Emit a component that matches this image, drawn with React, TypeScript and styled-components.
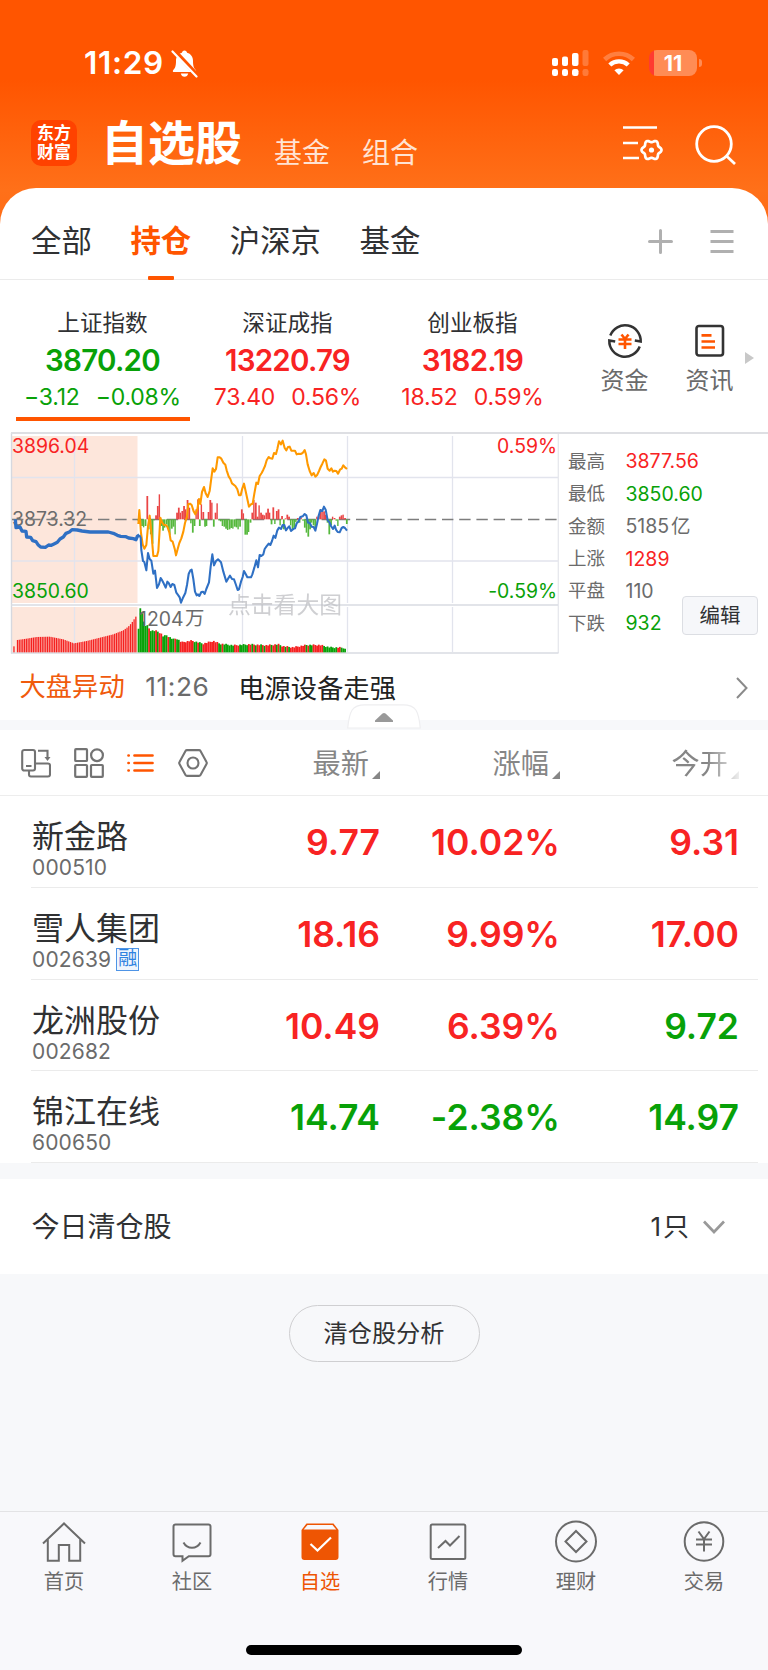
import React from "react";
import styled, { createGlobalStyle, css } from "styled-components";

const ORANGE = "#ff5500";
const RED = "#f82323";
const GREEN = "#08a108";
const INK = "#303133";
const GREY = "#6b6b6b";
const PAGE = "#f7f8fa";

type Trend = "up" | "down" | "flat";
const trendColor = (t: Trend) => (t === "up" ? RED : t === "down" ? GREEN : GREY);

const GlobalStyle = createGlobalStyle`
  *, *::before, *::after { box-sizing: border-box; }
  html, body { margin: 0; padding: 0; }
  body {
    background: ${PAGE};
    color: ${INK};
    font-family: Inter, "Noto Sans CJK SC", sans-serif;
    font-feature-settings: "calt" 0;
  }
  svg { display: block; flex: none; }
`;

const Phone = styled.div`
  width: 768px;
  height: 1670px;
  display: flex;
  flex-direction: column;
  overflow: hidden;
  background: ${PAGE};
`;

/* ---------- Header ---------- */

const Header = styled.header`
  height: 240px;
  margin-bottom: -52px;
  flex: none;
  background: linear-gradient(180deg, #ff5500 0, #ff5500 80px, #ff7019 190px, #ff6a14 240px);
  color: #fff;
`;

const StatusBar = styled.div`
  height: 90px;
  padding: 36px 66px 0 84px;
  display: flex;
  justify-content: space-between;
`;

const StatusGroup = styled.div<{ $gap: number }>`
  height: 54px;
  display: flex;
  align-items: center;
  gap: ${(p) => p.$gap}px;
`;

const Clock = styled.span`
  font-size: 31.5px;
  line-height: 36px;
  font-weight: 600;
  letter-spacing: 0.7px;
`;

const Battery = styled.div`
  position: relative;
  width: 48px;
  height: 26px;
  border-radius: 8px;
  margin-right: 5px;
  background: linear-gradient(90deg, #ff3b30 0, #ff3b30 5px, #ff8c55 5px);
  font-size: 21.5px;
  line-height: 26px;
  font-weight: 700;
  text-align: center;
  &::after {
    content: "";
    position: absolute;
    right: -5px;
    top: 9px;
    width: 3px;
    height: 8px;
    border-radius: 0 4px 4px 0;
    background: #ff8c55;
  }
`;

const TitleBar = styled.div`
  height: 98px;
  padding: 0 32px 0 31px;
  display: flex;
  align-items: center;
`;

const Logo = styled.div`
  width: 46px;
  height: 46px;
  margin-top: 8px;
  border-radius: 10px;
  background: #ff4200;
  display: flex;
  flex-direction: column;
  align-items: center;
  justify-content: center;
  font-size: 17px;
  line-height: 19px;
  font-weight: 700;
`;

const PageTitle = styled.h1`
  margin: 7px 0 0 24px;
  font-size: 47px;
  line-height: 60px;
  font-weight: 700;
`;

const PageLink = styled.span`
  margin: 27px 0 0 32px;
  font-size: 28px;
  line-height: 36px;
  color: #ffe3d3;
  & + & { margin-left: 32px; }
`;

const HeaderActions = styled.div`
  margin: 13px 0 0 auto;
  display: flex;
  gap: 32px;
`;

/* ---------- Tabs ---------- */

const Panel = styled.section`
  flex: none;
  background: #fff;
`;

const TabsPanel = styled(Panel)`
  position: relative;
  height: 92px;
  border-radius: 36px 36px 0 0;
  border-bottom: 1px solid #ebebeb;
  padding: 0 34px 0 31px;
  display: flex;
  align-items: stretch;
`;

const Tab = styled.div<{ $active?: boolean }>`
  position: relative;
  margin-right: 38.6px;
  padding-top: 34px;
  font-size: 30.4px;
  line-height: 38px;
  color: ${(p) => (p.$active ? ORANGE : INK)};
  font-weight: ${(p) => (p.$active ? 700 : 400)};
  ${(p) =>
    p.$active &&
    css`
      &::after {
        content: "";
        position: absolute;
        left: calc(50% - 13px);
        bottom: -1px;
        width: 26px;
        height: 4px;
        border-radius: 1px;
        background: ${ORANGE};
      }
    `}
`;

const TabActions = styled.div`
  margin-left: auto;
  padding-top: 41px;
  display: flex;
  gap: 37px;
`;

/* ---------- Index strip ---------- */

const IndexStrip = styled(Panel)`
  height: 152px;
  padding-left: 10px;
  display: flex;
`;

const IndexCard = styled.div<{ $trend: Trend; $active?: boolean }>`
  flex: none;
  width: 185px;
  padding-top: 31px;
  display: flex;
  flex-direction: column;
  align-items: center;
  color: ${(p) => trendColor(p.$trend)};
  &::after {
    content: "";
    margin-top: 8px;
    width: 174px;
    height: 4px;
    background: ${(p) => (p.$active ? ORANGE : "transparent")};
  }
`;

const IndexName = styled.div`
  font-size: 22.6px;
  line-height: 24px;
  color: ${INK};
`;

const IndexValue = styled.div`
  margin-top: 8px;
  font-size: 29.5px;
  line-height: 34px;
  font-weight: 600;
  letter-spacing: -0.75px;
`;

const IndexChange = styled.div`
  margin-top: 8px;
  display: flex;
  gap: 16px;
  font-size: 23px;
  line-height: 24px;
  letter-spacing: -0.2px;
`;

const Shortcuts = styled.div`
  flex: none;
  display: flex;
  margin-left: 17px;
`;

const Shortcut = styled.div`
  width: 85px;
  padding-top: 43px;
  display: flex;
  flex-direction: column;
  align-items: center;
  gap: 7px;
  font-size: 24px;
  line-height: 30px;
  color: ${GREY};
`;

const MoreArrow = styled.div`
  margin: 72px 0 0 -7px;
  width: 0;
  height: 0;
  border-style: solid;
  border-width: 6px 0 6px 9px;
  border-color: transparent transparent transparent #c8c8c8;
`;

/* ---------- Chart ---------- */

const ChartRow = styled(Panel)`
  height: 223px;
  display: flex;
`;

const StatPanel = styled.div`
  position: relative;
  flex: 1;
  border-top: 2px solid #dedfe3;
  padding: 11px 0 0 8px;
`;

const StatRow = styled.div`
  display: grid;
  grid-template-columns: 57.5px auto;
  height: 32.45px;
  align-items: center;
`;

const StatLabel = styled.span`
  font-size: 18.5px;
  line-height: 28px;
  margin-top: -1px;
  color: ${GREY};
`;

const StatValue = styled.span<{ $trend: Trend }>`
  font-size: 19.5px;
  line-height: 28px;
  color: ${(p) => trendColor(p.$trend)};
`;

const EditButton = styled.button`
  position: absolute;
  left: 122px;
  top: 162px;
  width: 76px;
  height: 39px;
  padding: 0;
  border: 1.5px solid #dcdee3;
  border-radius: 4px;
  background: #f6f7fa;
  font: 400 20.5px/34px Inter, "Noto Sans CJK SC", sans-serif;
  color: ${INK};
`;

const ChartText = styled.text<{ $trend: Trend }>`
  font-size: 19.4px;
  fill: ${(p) => trendColor(p.$trend)};
`;

const Watermark = styled.text`
  font-size: 22.8px;
  fill: #bfc0c4;
  opacity: 0.75;
`;

/* ---------- News ---------- */

const NewsRow = styled(Panel)`
  height: 65px;
  padding: 0 20px 0 19.5px;
  display: flex;
  align-items: center;
  font-size: 26.3px;
  line-height: 34px;
`;

const NewsTag = styled.span`
  margin-top: -1px;
  color: #f05a0c;
`;

const NewsTime = styled.span`
  margin: -1px 0 0 20.5px;
  width: 93px;
  letter-spacing: 0.6px;
  color: ${GREY};
`;

const NewsTitle = styled.span`
  flex: 1;
  margin-top: 2px;
  color: #222;
`;

const Band = styled.div<{ $h: number }>`
  position: relative;
  flex: none;
  height: ${(p) => p.$h}px;
  background: ${PAGE};
`;

const Notch = styled.div`
  position: absolute;
  left: 347px;
  top: -16px;
`;

/* ---------- Watch list ---------- */

const TableHead = styled(Panel)`
  height: 66px;
  border-bottom: 1.5px solid #ededed;
  padding: 2px 0 0 20.5px;
  display: flex;
`;

const ViewModes = styled.div`
  width: 188px;
  display: flex;
  align-items: center;
  justify-content: space-between;
  padding-bottom: 2px;
`;

const HeadCell = styled.div<{ $w: number; $fade?: boolean }>`
  width: ${(p) => p.$w}px;
  display: flex;
  justify-content: flex-end;
  align-items: center;
  gap: 3px;
  font-size: 28.2px;
  line-height: 36px;
  color: #868686;
  &::after {
    content: "";
    margin-top: 22px;
    border-style: solid;
    border-width: 0 0 8px 8px;
    border-color: transparent transparent #868686 transparent;
  }
  ${(p) =>
    p.$fade &&
    css`
      -webkit-mask-image: linear-gradient(90deg, #000 0, #000 calc(100% - 32px), rgba(0, 0, 0, 0.15) 100%);
      mask-image: linear-gradient(90deg, #000 0, #000 calc(100% - 32px), rgba(0, 0, 0, 0.15) 100%);
    `}
`;

const StockList = styled(Panel)`
  padding: 0 10px 0 31px;
`;

const StockRow = styled.div`
  display: grid;
  grid-template-columns: 349px 180px 179px;
  height: 91.75px;
  border-bottom: 1px solid #ebebeb;
`;

const StockIdent = styled.div`
  grid-column: 1;
  grid-row: 1;
  padding: 22px 0 0 1px;
`;

const StockName = styled.div`
  font-size: 32px;
  line-height: 38px;
`;

const StockCode = styled.div`
  display: flex;
  align-items: center;
  gap: 5px;
  margin-top: -2px;
  font-size: 21px;
  line-height: 28px;
  letter-spacing: 0.15px;
  color: ${GREY};
`;

const MarginTag = styled.span`
  width: 23px;
  height: 23px;
  border: 1px solid #4e94e6;
  font-size: 19px;
  line-height: 20px;
  text-align: center;
  color: #2f82e0;
  background: #eef5fd;
`;

const Quote = styled.div<{ $trend: Trend; $col: number }>`
  grid-column: ${(p) => p.$col};
  grid-row: 1;
  padding-top: 25px;
  text-align: right;
  font-size: 35.5px;
  line-height: 44px;
  font-weight: 600;
  color: ${(p) => trendColor(p.$trend)};
`;

/* ---------- Cleared positions ---------- */

const ClearedRow = styled(Panel)`
  height: 95px;
  padding: 1px 43px 0 31.5px;
  display: flex;
  align-items: center;
  font-size: 28px;
  line-height: 36px;
`;

const ClearedCount = styled.span`
  margin-left: auto;
  margin-right: 12px;
  font-size: 26px;
  letter-spacing: 2px;
`;

const AnalysisArea = styled.div`
  flex: 1;
  padding-top: 31px;
  display: flex;
  justify-content: center;
  align-items: flex-start;
`;

const PillButton = styled.button`
  width: 191px;
  height: 57px;
  padding: 2px 0 0;
  border: 1.3px solid #cfcfd1;
  border-radius: 29px;
  background: transparent;
  font: 400 24.2px/1 Inter, "Noto Sans CJK SC", sans-serif;
  color: ${INK};
`;

/* ---------- Bottom navigation ---------- */

const NavBar = styled.nav`
  flex: none;
  height: 159px;
  border-top: 1px solid #e3e3e5;
  background: #f8f8fb;
  display: flex;
  flex-direction: column;
  align-items: center;
`;

const NavItems = styled.div`
  width: 100%;
  display: grid;
  grid-template-columns: repeat(6, 128px);
`;

const NavItem = styled.div<{ $active?: boolean }>`
  padding-top: 8px;
  display: flex;
  flex-direction: column;
  align-items: center;
  gap: 4px;
  font-size: 20.2px;
  line-height: 28px;
  color: ${(p) => (p.$active ? "#ee5503" : GREY)};
`;

const HomeIndicator = styled.div`
  margin-top: 48.5px;
  width: 276px;
  height: 10px;
  border-radius: 5px;
  background: #000;
`;

/* ---------- Icons ---------- */

const BellOff = () => (
  <svg width="27" height="29" viewBox="0 0 27 29">
    <path d="M13.500 1.500c1.500 0 2.400 1 2.600 2.300 3.700 1 5.900 4 5.900 8 0 5.500.9 7.300 2.700 9.100.9 1 .5 2.100-.9 2.100H3.200c-1.400 0-1.800-1.100-.9-2.100C4.100 19.100 5 17.300 5 11.800c0-4 2.200-7 5.900-8 .2-1.300 1.100-2.300 2.600-2.300z" fill="#fff" />
    <path d="M9.800 24.500h7.400c-.4 2-1.800 3.300-3.700 3.300s-3.300-1.300-3.700-3.300z" fill="#fff" />
    <path d="M3 1.500 26.500 26.500" stroke="#ff5500" strokeWidth="4.500" />
    <path d="M1.500 2.500 25.500 27.500" stroke="#fff" strokeWidth="2.200" strokeLinecap="round" />
  </svg>
);

const Signal = () => (
  <svg width="38" height="28" viewBox="0 0 38 28" fill="#fff">
    <rect x="1" y="9" width="6" height="8" rx="2" />
    <rect x="11" y="7.500" width="6" height="9.500" rx="2" />
    <rect x="21" y="4" width="6.500" height="13" rx="2" />
    <rect x="31.500" y="1" width="6" height="16" rx="2" opacity=".22" />
    <rect x="1" y="20" width="6" height="7" rx="2.200" />
    <rect x="11" y="20" width="6" height="7" rx="2.200" />
    <rect x="21" y="20" width="6.500" height="7" rx="2.200" />
    <rect x="31.500" y="20" width="6" height="7" rx="2.200" opacity=".22" />
  </svg>
);

const Wifi = () => (
  <svg width="32" height="26" viewBox="0 0 32 26" fill="none" stroke="#fff">
    <path d="M1.600 9.500a20.800 20.800 0 0 1 28.800 0" strokeWidth="4.600" opacity=".25" />
    <path d="M6.800 15a13.600 13.600 0 0 1 18.400 0" strokeWidth="4.400" />
    <path d="M16 25l-4.600-4.800a6.800 6.800 0 0 1 9.200 0z" fill="#fff" stroke="none" />
  </svg>
);

const gear = Array.from({ length: 72 }, (_, i) => {
  const a = (i / 72) * Math.PI * 2;
  const r = 8.9 + 1.1 * Math.cos(a * 6);
  return `${(30.5 + r * Math.cos(a)).toFixed(2)},${(25 + r * Math.sin(a)).toFixed(2)}`;
}).join(" ");

const ListSettings = () => (
  <svg width="42" height="42" viewBox="0 0 42 42" fill="none" stroke="#fff" strokeWidth="2.700">
    <path d="M2 2.500h34M2 18h15M2 33h16" />
    <polygon points={gear} strokeLinejoin="round" />
    <circle cx="30.500" cy="25" r="2.600" fill="#fff" stroke="none" />
  </svg>
);

const Search = () => (
  <svg width="41" height="42" viewBox="0 0 41 42" fill="none" stroke="#fff" strokeWidth="2.800">
    <circle cx="19" cy="19" r="17.300" />
    <path d="M31.500 31 40 39" />
  </svg>
);

const Plus = () => (
  <svg width="25" height="25" viewBox="0 0 25 25" stroke="#b0b0b0" strokeWidth="3" strokeLinecap="round">
    <path d="M12.500 1.500v22M1.500 12.500h22" />
  </svg>
);

const Lines = () => (
  <svg width="24" height="25" viewBox="0 0 24 25" stroke="#b0b0b0" strokeWidth="2.800">
    <path d="M.500 2.500h23M.500 12.500h23M.500 22.500h23" />
  </svg>
);

const FundFlow = () => (
  <svg width="36" height="36" viewBox="0 0 36 36" fill="none" stroke="#333" strokeWidth="2.500">
    <path d="M3.300 12.500A15.700 15.700 0 0 1 33.700 18.500L27.800 17.500" />
    <path d="M32.700 23.500A15.700 15.700 0 0 1 2.300 17.500L8.200 18.500" />
    <path d="M14.500 11.500l3.500 4.500 3.500-4.500M11.500 16.500h13M11.500 21h13M18 16v10" stroke={ORANGE} strokeWidth="2.600" />
  </svg>
);

const NewsDoc = () => (
  <svg width="36" height="36" viewBox="0 0 36 36" fill="none" stroke="#333" strokeWidth="2.600">
    <rect x="4.500" y="3" width="26.500" height="29.500" rx="2.500" />
    <path d="M9.500 12.300h10M9.500 18.500h13.500M9.500 24.500h13.500" stroke={ORANGE} strokeWidth="2.700" />
  </svg>
);

const ChevronRight = () => (
  <svg width="12" height="22" viewBox="0 0 12 22" fill="none" stroke="#8a8a8a" strokeWidth="2">
    <path d="M1 1l9.500 10L1 21" />
  </svg>
);

const ChevronDown = () => (
  <svg width="22" height="14" viewBox="0 0 22 14" fill="none" stroke="#999" strokeWidth="2.700">
    <path d="M1 1.500l10 10.500L21 1.500" />
  </svg>
);

const Collapse = () => (
  <svg width="74" height="25" viewBox="0 0 74 25">
    <path d="M.7 24C2.500 7 5 .8 18 .8h38C69 .8 71.500 7 73.300 24z" fill="#fff" stroke="#eeeef0" strokeWidth="1.200" />
    <path d="M28 18v-1.500l7.500-7q1.500-1.200 3 0l7.500 7v1.500z" fill="#999" />
  </svg>
);

const Rotate = () => (
  <svg width="30" height="30" viewBox="0 0 30 30" fill="none" stroke="#737373" strokeWidth="2.100">
    <rect x="1.200" y="2" width="12.800" height="20.500" rx="2" />
    <path d="M5 18h5.500M17 2.800h9.500v8M14 15.500h13q2 0 2 2v9q0 2-2 2H10q-2 0-2-2v-4" />
    <path d="M23.500 9h6l-3 4z" fill="#737373" stroke="none" />
  </svg>
);

const Grid = () => (
  <svg width="30" height="30" viewBox="0 0 30 30" fill="none" stroke="#737373" strokeWidth="2.200">
    <rect x="1.200" y="1.200" width="11.800" height="11.800" rx=".8" />
    <circle cx="23" cy="7.200" r="5.900" />
    <rect x="1.200" y="17" width="11.800" height="11.800" rx=".8" />
    <rect x="17" y="17" width="11.800" height="11.800" rx=".8" />
  </svg>
);

const ListView = () => (
  <svg width="28" height="20" viewBox="0 0 28 20" stroke={ORANGE} strokeWidth="2.700" strokeLinecap="round">
    <path d="M7.500 2.500h18M7.500 10h18M7.500 17.500h18M1.500 2.500h.2M1.500 10h.2M1.500 17.500h.2" />
  </svg>
);

const HexSettings = () => (
  <svg width="30" height="28" viewBox="0 0 30 28" fill="none" stroke="#737373" strokeWidth="2.100" strokeLinejoin="round">
    <path d="M9 1.100h12q1 0 1.500.9l6 11q.6 1 0 2l-6 11q-.5.9-1.500.9H9q-1 0-1.500-.9l-6-11q-.6-1 0-2l6-11Q8 1.100 9 1.100z" />
    <circle cx="15" cy="14" r="5.500" />
  </svg>
);

const NavSvg = ({ children }: { children: React.ReactNode }) => (
  <svg width="44" height="44" viewBox="0 0 44 44" fill="none" stroke="currentColor" strokeWidth="2">
    {children}
  </svg>
);

const HomeIcon = () => (
  <NavSvg>
    <path d="M1 23.500 22 3.500l21 20M5.800 19.500v21.200h11V25h10.400v15.700h11V19.500" />
  </NavSvg>
);
const ChatIcon = () => (
  <NavSvg>
    <path d="M5.500 4.500h33q2 0 2 2v27.700q0 2-2 2H18.800l-6.300 4.500v-4.500H5.500q-2 0-2-2V6.500q0-2 2-2z" />
    <path d="M13.500 22.500c3.800 7 13.200 7 17 0" />
  </NavSvg>
);
const WatchIcon = () => (
  <NavSvg>
    <path d="M8.500 3.500h27l5 6.500v27q0 3-3 3h-31q-3 0-3-3V10z" fill="currentColor" stroke="none" />
    <path d="M9.500 5h25l3.800 4.600h-32.600z" fill="#f8f8fb" stroke="none" />
    <path d="M12.500 24l7 6.500L33 17.500" stroke="#fff" strokeWidth="2.200" />
  </NavSvg>
);
const MarketIcon = () => (
  <NavSvg>
    <rect x="4.700" y="4.500" width="34.600" height="34.600" rx="1.500" />
    <path d="M12 28l7.500-7 4.500 4.500 9.500-9.500" />
  </NavSvg>
);
const WealthIcon = () => (
  <NavSvg>
    <circle cx="22" cy="21.500" r="20" />
    <path d="M22 11l10.500 10.500L22 32 11.500 21.500z" />
  </NavSvg>
);
const TradeIcon = () => (
  <NavSvg>
    <circle cx="22" cy="21.500" r="19.300" />
    <path d="M16.500 11.500l5.500 7.500 5.500-7.500M14 19.500h16M14 24.500h16M22 19v12.500" />
  </NavSvg>
);

/* ---------- Intraday chart ---------- */

type Pt = [number, number];

const lerp = (pts: Pt[], x: number) => {
  const i = pts.findIndex((p) => p[0] >= x);
  if (i <= 0) return pts[i === 0 ? 0 : pts.length - 1][1];
  const [x0, y0] = pts[i - 1];
  const [x1, y1] = pts[i];
  return y0 + ((y1 - y0) * (x - x0)) / (x1 - x0);
};

const preOpenLine =
  "46,283 48,308 60,306 66,318 78,319 80,336 92,337 98,347 108,350 114,359 122,366 136,367 146,360 154,361 162,357 172,352 180,342 190,336 198,325 208,321 216,314 232,315 246,318 270,321 325,321 340,325 352,331 362,334 378,335 386,339 400,341 408,344 412,334 418,330";

const indexLine =
  "418,330 422,338 424,375 429,408 433,411 439,436 444,384 449,402 454,407 460,446 465,437 471,489 477,478 482,459 487,467 491,475 497,488 502,470 506,474 512,486 517,477 523,480 529,503 535,511 539,517 543,533 549,518 556,504 561,480 566,447 571,436 575,434 580,462 585,500 590,511 594,508 598,513 604,501 609,500 614,507 619,492 627,472 632,425 637,388 642,421 648,408 654,403 663,412 670,440 679,470 685,460 690,452 696,462 702,463 707,477 713,495 717,493 723,470 728,456 732,438 737,447 742,457 753,457 757,448 763,428 769,406 774,427 779,390 784,393 790,388 794,372 799,365 806,356 811,360 816,348 821,332 826,339 832,316 837,308 843,312 848,300 853,300 858,316 863,309 868,304 873,318 881,311 885,310 890,295 895,290 901,276 908,274 914,267 919,271 924,293 929,293 935,305 941,306 946,317 951,296 956,272 961,255 967,258 972,245 977,254 983,286 989,293 993,303 999,312 1004,302 1008,314 1013,321 1019,322 1025,309 1030,306 1035,309 1041,317";

const leadLine =
  "415,297 418,255 423,324 428,358 433,371 439,360 444,304 449,272 454,321 460,393 471,393 475,378 478,330 481,278 486,292 492,300 497,300 502,305 508,322 512,346 518,350 524,371 528,391 533,372 538,354 544,340 550,320 555,294 561,275 565,237 570,236 575,240 581,259 586,268 592,253 597,222 601,237 606,201 612,186 617,205 623,216 629,198 633,167 638,130 643,140 648,132 653,97 659,97 664,101 670,113 676,119 680,136 686,154 691,162 696,175 706,183 712,193 717,211 722,211 727,190 732,176 737,199 742,222 747,245 753,238 758,236 763,206 769,173 774,177 779,153 785,144 790,134 795,123 800,106 806,96 811,100 817,101 822,84 828,87 832,72 837,49 843,58 848,47 854,69 859,76 864,66 869,65 874,77 880,77 885,77 890,88 896,86 902,87 908,84 914,75 918,88 923,118 929,138 935,151 941,144 946,155 952,149 957,138 962,126 967,116 973,103 978,107 983,131 989,137 994,130 999,140 1004,137 1009,138 1014,146 1020,134 1025,131 1030,121 1035,127 1041,132";

/* Buying (positive) and selling (negative) strength, one value per minute. */
const strength = [
  -5, -10, -20, -24, -20, 70, -30, -45, -73, -3, 12, 40, 75, -20, -34, -25, -15, -28, -47, -28, -22, -45, 20, 35, 20, 25,
  40, 30, 58, 35, -12, -40, -20, 30, 60, -20, 45, 22, -22, -20, 22, 58, 50, -22, 20, 48, -3, -6, -20, -22, -28, -32, -30,
  -26, -28, -22, -24, -30, -22, 30, 18, -46, -46, -38, -10, 20, 58, 50, 8, 42, 20, 14, 12, 20, 32, 20, -15, 36, -14, 25,
  30, -18, 10, -30, 3, 14, 8, -18, -30, -25, -8, 4, -10, 6, -4, -25, -40, -52, -30, -10, -18, -26, 8, 14, 24, 28, 24, 14,
  -10, -45, -18, 8, 4, -4, -20, 8, 12, 14, 4, -14,
];

const preVolume: Pt[] = [
  [46, 664], [51, 664], [52, 645], [80, 641], [110, 636], [150, 635], [190, 643], [222, 655], [260, 648], [300, 638],
  [340, 628], [370, 616], [385, 605], [395, 594], [403, 582], [411, 570],
];

const volume: Pt[] = [
  [415, 636], [419, 545], [426, 560], [432, 592], [438, 604], [444, 602], [450, 616], [470, 618], [482, 624], [490, 634],
  [500, 631], [520, 643], [530, 640], [545, 652], [575, 647], [610, 656], [640, 648], [660, 656], [700, 661], [750, 658],
  [800, 661], [835, 658], [850, 664], [880, 667], [920, 660], [960, 660], [990, 667], [1030, 668], [1043, 678],
];

const volumeTone =
  "ggggggrgggrgrrgggrgggrggrrrrrrrrggrggrrrrrrrrrggrggggggrrrgggggrrgrgrrgrgrrrgrrgrgrrgrgrrrrrrrrrgrggrrrrrrggggggggrrggg";

const STEP = 5.25;

const IntradayChart = () => (
  <svg width="560" height="223" viewBox="0 432 560 223">
    <path d="M12 436h125.500v167H12zM12 607h125.500v45.500H12z" fill="#fde6db" />
    <g stroke="#e2e4ed" strokeWidth="1.300" fill="none">
      <path d="M12 477.500h546M12 561h546M74.500 436v167M74.500 607v45M242.500 436v167M242.500 607v45M347.500 436v167M347.500 607v45M452.500 436v167M452.500 607v45" />
      <path d="M558.300 433v220" stroke="#e6e7ec" />
      <path d="M11.500 433v220.500" stroke="#d6d8df" strokeWidth="1.400" />
      <path d="M11 605h547M11 653h547.500" stroke="#d9dbe2" strokeWidth="1.600" />
      <path d="M11 433h549" stroke="#dedfe3" strokeWidth="2" />
    </g>
    <ChartText $trend="up" x="12" y="453">3896.04</ChartText>
    <ChartText $trend="flat" x="12" y="525.500">3873.32</ChartText>
    <ChartText $trend="down" x="12" y="597.800">3850.60</ChartText>
    <ChartText $trend="up" x="557" y="453" textAnchor="end">0.59%</ChartText>
    <ChartText $trend="down" x="557" y="597.800" textAnchor="end">-0.59%</ChartText>
    <path d="M12 519.500H557" stroke="#7d7d7d" strokeWidth="1.300" strokeDasharray="11.400 5.800" />
    <g transform="translate(0 425) scale(.333333)">
      {strength.map((v, i) => (
        <rect
          key={i}
          x={413 + i * STEP}
          y={v > 0 ? 283 - v : 283}
          width={i % 3 === 0 ? 4.2 : 5.3}
          height={Math.abs(v)}
          fill={v > 0 ? "#ea4545" : "#55b83c"}
        />
      ))}
      {Array.from({ length: 70 }, (_, i) => 40 + i * 5.3)
        .filter((x) => x < 43 || x > 50)
        .map((x) => {
          const top = lerp(preVolume, x + 2);
          return <rect key={x} x={x} y={top} width={3.8} height={682 - top} fill="#f52020" />;
        })}
      {volumeTone.split("").map((tone, i) => {
        const x = 413 + i * STEP;
        const top = lerp(volume, x + 3) + ((i * 7) % 5) - 2;
        return <rect key={i} x={x} y={top} width={5.4} height={682 - top} fill={tone === "g" ? "#08a108" : "#f52020"} />;
      })}
      <polyline points={preOpenLine} fill="none" stroke="#2f70c4" strokeWidth="10" strokeLinejoin="round" />
      <polyline points={leadLine} fill="none" stroke="#ff9900" strokeWidth="6.200" strokeLinejoin="round" />
      <polyline points={indexLine} fill="none" stroke="#2f70c4" strokeWidth="6.200" strokeLinejoin="round" />
    </g>
    <ChartText $trend="flat" x="139" y="625.500">1204</ChartText>
    <ChartText $trend="flat" x="185" y="625">万</ChartText>
    <Watermark x="228" y="613">点击看大图</Watermark>
  </svg>
);

/* ---------- Data ---------- */

const indices: { name: string; value: string; diff: string; pct: string; trend: Trend }[] = [
  { name: "上证指数", value: "3870.20", diff: "−3.12", pct: "−0.08%", trend: "down" },
  { name: "深证成指", value: "13220.79", diff: "73.40", pct: "0.56%", trend: "up" },
  { name: "创业板指", value: "3182.19", diff: "18.52", pct: "0.59%", trend: "up" },
];

const stats: { label: string; value: string; trend: Trend }[] = [
  { label: "最高", value: "3877.56", trend: "up" },
  { label: "最低", value: "3850.60", trend: "down" },
  { label: "金额", value: "5185\u200a亿", trend: "flat" },
  { label: "上涨", value: "1289", trend: "up" },
  { label: "平盘", value: "110", trend: "flat" },
  { label: "下跌", value: "932", trend: "down" },
];

const stocks: { name: string; code: string; margin?: boolean; last: string; pct: string; open: string; trend: Trend; openTrend: Trend }[] = [
  { name: "新金路", code: "000510", last: "9.77", pct: "10.02%", open: "9.31", trend: "up", openTrend: "up" },
  { name: "雪人集团", code: "002639", margin: true, last: "18.16", pct: "9.99%", open: "17.00", trend: "up", openTrend: "up" },
  { name: "龙洲股份", code: "002682", last: "10.49", pct: "6.39%", open: "9.72", trend: "up", openTrend: "down" },
  { name: "锦江在线", code: "600650", last: "14.74", pct: "-2.38%", open: "14.97", trend: "down", openTrend: "down" },
];

const navItems = [
  { label: "首页", Icon: HomeIcon },
  { label: "社区", Icon: ChatIcon },
  { label: "自选", Icon: WatchIcon, active: true },
  { label: "行情", Icon: MarketIcon },
  { label: "理财", Icon: WealthIcon },
  { label: "交易", Icon: TradeIcon },
];

export default function App() {
  return (
    <Phone>
      <GlobalStyle />
      <Header>
        <StatusBar>
          <StatusGroup $gap={7}>
            <Clock>11:29</Clock>
            <BellOff />
          </StatusGroup>
          <StatusGroup $gap={14}>
            <Signal />
            <Wifi />
            <Battery>11</Battery>
          </StatusGroup>
        </StatusBar>
        <TitleBar>
          <Logo>
            <span>东方</span>
            <span>财富</span>
          </Logo>
          <PageTitle>自选股</PageTitle>
          <PageLink>基金</PageLink>
          <PageLink>组合</PageLink>
          <HeaderActions>
            <ListSettings />
            <Search />
          </HeaderActions>
        </TitleBar>
      </Header>

      <TabsPanel>
        <Tab>全部</Tab>
        <Tab $active>持仓</Tab>
        <Tab>沪深京</Tab>
        <Tab>基金</Tab>
        <TabActions>
          <Plus />
          <Lines />
        </TabActions>
      </TabsPanel>

      <IndexStrip>
        {indices.map((it, i) => (
          <IndexCard key={it.name} $trend={it.trend} $active={i === 0}>
            <IndexName>{it.name}</IndexName>
            <IndexValue>{it.value}</IndexValue>
            <IndexChange>
              <span>{it.diff}</span>
              <span>{it.pct}</span>
            </IndexChange>
          </IndexCard>
        ))}
        <Shortcuts>
          <Shortcut>
            <FundFlow />
            资金
          </Shortcut>
          <Shortcut>
            <NewsDoc />
            资讯
          </Shortcut>
        </Shortcuts>
        <MoreArrow />
      </IndexStrip>

      <ChartRow>
        <IntradayChart />
        <StatPanel>
          {stats.map((s) => (
            <StatRow key={s.label}>
              <StatLabel>{s.label}</StatLabel>
              <StatValue $trend={s.trend}>{s.value}</StatValue>
            </StatRow>
          ))}
          <EditButton>编辑</EditButton>
        </StatPanel>
      </ChartRow>

      <NewsRow>
        <NewsTag>大盘异动</NewsTag>
        <NewsTime>11:26</NewsTime>
        <NewsTitle>电源设备走强</NewsTitle>
        <ChevronRight />
      </NewsRow>
      <Band $h={10}>
        <Notch>
          <Collapse />
        </Notch>
      </Band>

      <TableHead>
        <ViewModes>
          <Rotate />
          <Grid />
          <ListView />
          <HexSettings />
        </ViewModes>
        <HeadCell $w={171.5}>最新</HeadCell>
        <HeadCell $w={180}>涨幅</HeadCell>
        <HeadCell $w={179} $fade>
          今开
        </HeadCell>
      </TableHead>
      <StockList>
        {stocks.map((s) => (
          <StockRow key={s.code}>
            <StockIdent>
              <StockName>{s.name}</StockName>
              <StockCode>
                {s.code}
                {s.margin && <MarginTag>融</MarginTag>}
              </StockCode>
            </StockIdent>
            <Quote $trend={s.trend} $col={1}>{s.last}</Quote>
            <Quote $trend={s.trend} $col={2}>{s.pct}</Quote>
            <Quote $trend={s.openTrend} $col={3}>{s.open}</Quote>
          </StockRow>
        ))}
      </StockList>
      <Band $h={16} />

      <ClearedRow>
        今日清仓股
        <ClearedCount>1只</ClearedCount>
        <ChevronDown />
      </ClearedRow>

      <AnalysisArea>
        <PillButton>清仓股分析</PillButton>
      </AnalysisArea>

      <NavBar>
        <NavItems>
          {navItems.map(({ label, Icon, active }) => (
            <NavItem key={label} $active={active}>
              <Icon />
              {label}
            </NavItem>
          ))}
        </NavItems>
        <HomeIndicator />
      </NavBar>
    </Phone>
  );
}
